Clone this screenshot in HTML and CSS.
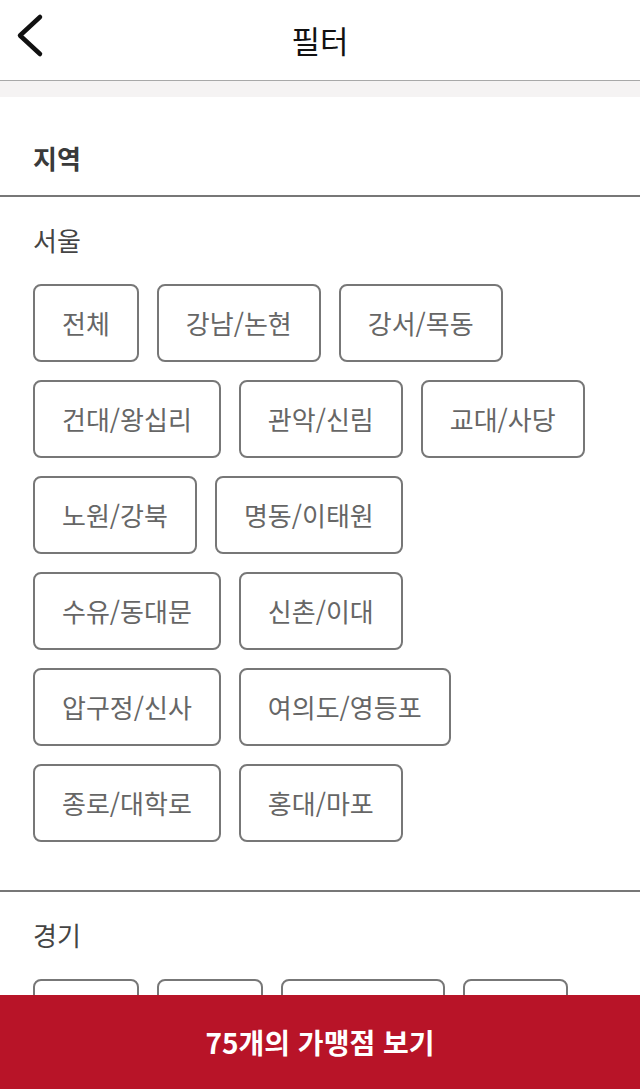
FILE: index.html
```html
<!DOCTYPE html>
<html lang="ko">
<head>
    <meta charset="UTF-8">
    <meta name="viewport" content="width=device-width, initial-scale=1.0">
    <link rel="stylesheet" href="styles.css">
    <title>필터</title>
</head>
<body>
    <!-- Header -->
    <header class="header">
        <a class="back" href="#">
            <svg width="32" height="48" viewBox="0 0 32 48">
                <polyline points="26,5 6,23.5 26,42" fill="none" stroke="#111" stroke-width="4.5" stroke-linecap="round" stroke-linejoin="round"/>
            </svg>
        </a>
        <h1>필터</h1>
    </header>
    <div class="band"></div>

    <main>
        <h2 class="section-title">지역</h2>

        <!-- 서울 -->
        <section class="region">
            <h3>서울</h3>
            <div class="chips">
                <button class="chip">전체</button>
                <button class="chip">강남/논현</button>
                <button class="chip">강서/목동</button>
                <button class="chip">건대/왕십리</button>
                <button class="chip">관악/신림</button>
                <button class="chip">교대/사당</button>
                <button class="chip">노원/강북</button>
                <button class="chip">명동/이태원</button>
                <button class="chip">수유/동대문</button>
                <button class="chip">신촌/이대</button>
                <button class="chip">압구정/신사</button>
                <button class="chip">여의도/영등포</button>
                <button class="chip">종로/대학로</button>
                <button class="chip">홍대/마포</button>
            </div>
        </section>

        <!-- 경기 -->
        <section class="region">
            <h3>경기</h3>
            <div class="chips">
                <button class="chip">전체</button>
                <button class="chip">분당</button>
                <button class="chip">수원/인계</button>
                <button class="chip">일산</button>
            </div>
        </section>
    </main>

    <!-- Bottom button -->
    <footer class="bottom-bar">
        <button class="submit">75개의 가맹점 보기</button>
    </footer>
</body>
</html>
```

FILE: styles.css
```css
/* Reset */
body, h1, h2, h3 {
    margin: 0;
    padding: 0;
}

body {
    background-color: #fff;
    font-family: "Noto Sans CJK KR", "Noto Sans", sans-serif;
    color: #444;
    height: 1089px;
    overflow: hidden;
}

/* Header */
.header {
    position: relative;
    height: 80px;
    display: flex;
    align-items: center;
    justify-content: center;
    border-bottom: 1px solid #a8a8a8;
}

.header h1 {
    font-size: 31px;
    font-weight: 400;
    color: #111;
    line-height: 40px;
}

.back {
    position: absolute;
    left: 14px;
    top: 12px;
    display: block;
    line-height: 0;
}

.band {
    height: 16px;
    background-color: #f5f3f3;
}

/* Section title */
.section-title {
    font-size: 26px;
    font-weight: 700;
    line-height: 34px;
    color: #3a3a3a;
    padding: 44px 33px 20px;
    border-bottom: 2px solid #777;
}

/* Region groups */
.region {
    padding: 26px 33px 48px;
    border-bottom: 2px solid #777;
}

.region h3 {
    font-size: 26px;
    font-weight: 400;
    line-height: 34px;
    color: #444;
    margin-bottom: 27px;
}

.chips {
    display: flex;
    flex-wrap: wrap;
    gap: 18px;
}

.chip {
    box-sizing: border-box;
    height: 78px;
    padding: 0 27px;
    background: #fff;
    border: 2px solid #777;
    border-radius: 8px;
    font-family: inherit;
    font-size: 26px;
    color: #666;
    line-height: 1;
}

/* Bottom bar */
.bottom-bar {
    position: fixed;
    left: 0;
    right: 0;
    bottom: 0;
    height: 94px;
    background-color: #b81428;
}

.submit {
    width: 100%;
    height: 100%;
    background: none;
    border: none;
    font-family: inherit;
    font-size: 28px;
    font-weight: 700;
    color: #fff;
}
```
